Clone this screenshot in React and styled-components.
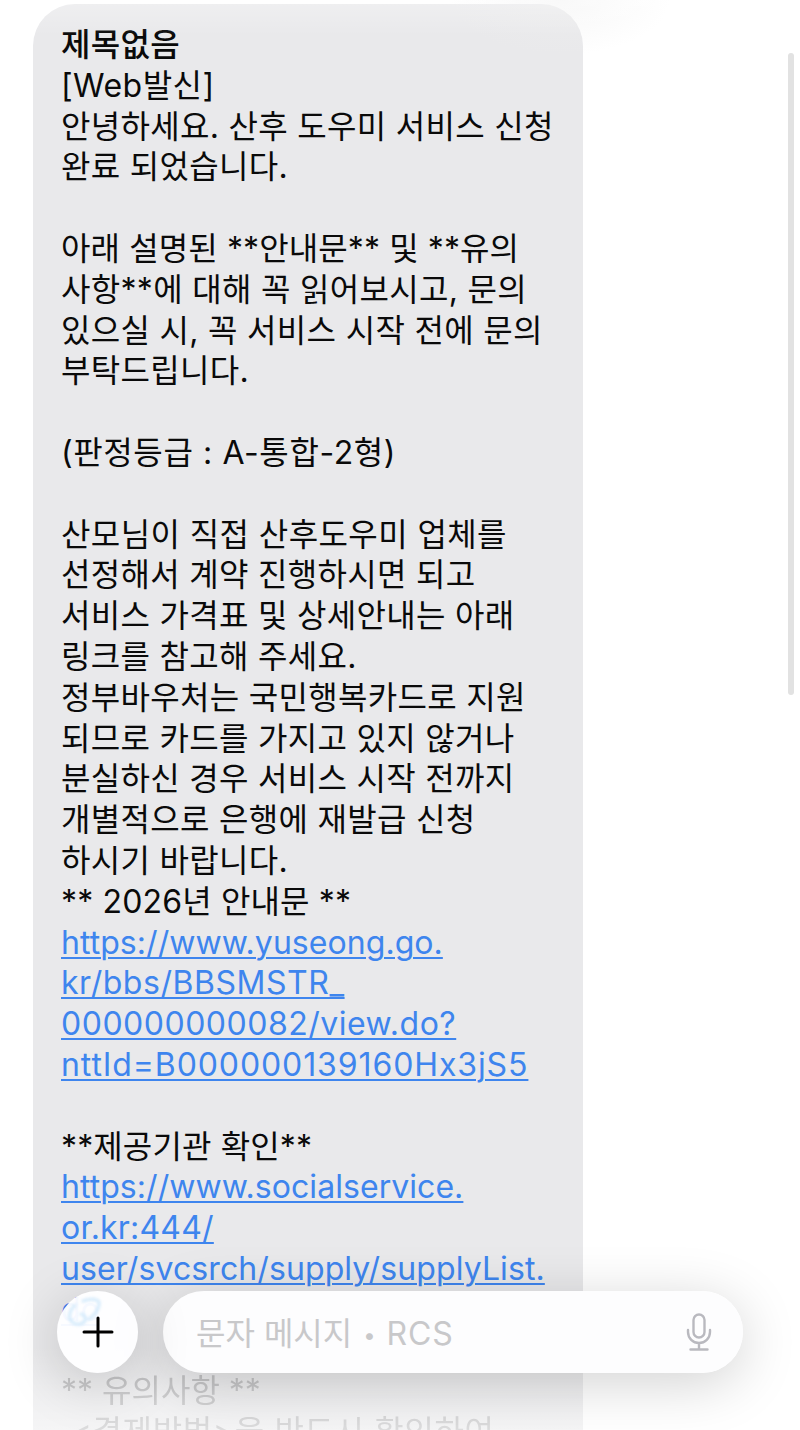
import React from "react";
import styled, { createGlobalStyle } from "styled-components";

const Global = createGlobalStyle`
  html, body { margin: 0; padding: 0; background: #fff; }
  #root { width: 800px; height: 1430px; overflow: hidden; }
`;

const Screen = styled.div`
  position: relative;
  width: 800px;
  height: 1430px;
  overflow: hidden;
  background: #fff;
`;

const Thread = styled.div`
  padding: 4px 0 0 33px;
`;

const Bubble = styled.div`
  width: 550px;
  height: 1500px;
  box-sizing: border-box;
  padding: 21px 0 0 28px;
  background: #e9e9eb;
  border-radius: 42px 42px 0 0;
  font-family: "Inter", "Noto Sans CJK KR", sans-serif;
  font-size: 32px;
  line-height: 40.8px;
  color: #0a0a0a;
  letter-spacing: 0.3px;
`;

const Line = styled.div`
  white-space: pre;
  height: 40.8px;
  font-weight: ${(p) => (p.$bold ? 500 : 400)};
  letter-spacing: ${(p) => (p.$track === undefined ? "inherit" : `${p.$track}px`)};
`;

const FadedLine = styled(Line)`
  color: #b4b4b6;
  filter: blur(0.5px);
`;

const LinkLine = styled(Line)`
  color: #3e85ee;
  text-decoration: underline;
  text-decoration-thickness: 2px;
  text-underline-offset: 3px;
`;

const TopFade = styled.div`
  position: absolute;
  left: 0;
  right: 0;
  top: 0;
  height: 60px;
  background:
    linear-gradient(to bottom, rgba(255, 255, 255, 0.3), rgba(255, 255, 255, 0) 36px),
    radial-gradient(ellipse 110px 55px at 560px 0, rgba(238, 238, 238, 0.5), rgba(255, 255, 255, 0));
`;

const Scrollbar = styled.div`
  position: absolute;
  right: 6px;
  top: 53px;
  width: 6px;
  height: 642px;
  border-radius: 3px;
  background: #e2e2e2;
`;

const Dock = styled.div`
  position: absolute;
  left: 0;
  right: 0;
  bottom: 0;
  height: 210px;
  padding: 71px 57px 0;
  box-sizing: border-box;
  display: flex;
  align-items: flex-start;
  gap: 25px;
  background: linear-gradient(to bottom, rgba(255, 255, 255, 0) 0%, rgba(255, 255, 255, 0) 60%, rgba(255, 255, 255, 0.55) 100%);
`;

const PlusButton = styled.div`
  position: relative;
  width: 81px;
  height: 82px;
  flex: none;
  border-radius: 50%;
  background: rgba(254, 254, 255, 0.96);
  box-shadow: 0 10px 56px rgba(0, 0, 0, 0.18);
  display: flex;
  align-items: center;
  justify-content: center;
  overflow: hidden;
`;

const Refraction = styled.svg`
  position: absolute;
  left: 8px;
  top: 5px;
  filter: blur(1.4px);
`;

const PlusIcon = styled.svg`
  position: relative;
`;

const Composer = styled.div`
  flex: none;
  width: 580px;
  height: 82px;
  border-radius: 41px;
  background: rgba(253, 253, 254, 0.96);
  box-shadow: 0 10px 56px rgba(0, 0, 0, 0.18);
  display: flex;
  align-items: center;
  justify-content: space-between;
  padding: 0 31px 0 33px;
  box-sizing: border-box;
`;

const Placeholder = styled.span`
  font-family: "Inter", "Noto Sans CJK KR", sans-serif;
  font-size: 32px;
  color: #c8c8ca;
  transform: translateY(-1px);
`;

const Dot = styled.span`
  font-size: 22px;
  margin: 0 11px;
  vertical-align: 2px;
`;

const Rcs = styled.span`
  letter-spacing: 0.8px;
`;

const lines = [
  { text: "[Web발신]", track: 0.45 },
  { text: "안녕하세요. 산후 도우미 서비스 신청" },
  { text: "완료 되었습니다." },
  { text: "" },
  { text: "아래 설명된 **안내문** 및 **유의", track: 0.1 },
  { text: "사항**에 대해 꼭 읽어보시고, 문의" },
  { text: "있으실 시, 꼭 서비스 시작 전에 문의" },
  { text: "부탁드립니다." },
  { text: "" },
  { text: "(판정등급 : A-통합-2형)", track: 0.6 },
  { text: "" },
  { text: "산모님이 직접 산후도우미 업체를", track: 0.4 },
  { text: "선정해서 계약 진행하시면 되고" },
  { text: "서비스 가격표 및 상세안내는 아래" },
  { text: "링크를 참고해 주세요." },
  { text: "정부바우처는 국민행복카드로 지원" },
  { text: "되므로 카드를 가지고 있지 않거나" },
  { text: "분실하신 경우 서비스 시작 전까지" },
  { text: "개별적으로 은행에 재발급 신청" },
  { text: "하시기 바랍니다." },
  { text: "** 2026년 안내문 **", track: 0.15 },
  { link: "https://www.yuseong.go.", track: 0.05 },
  { link: "kr/bbs/BBSMSTR_", track: 0.55 },
  { link: "000000000082/view.do?", track: 0.5 },
  { link: "nttId=B000000139160Hx3jS5", track: 0.9 },
  { text: "" },
  { text: "**제공기관 확인**", track: 0.12 },
  { link: "https://www.socialservice.", track: 0.05 },
  { link: "or.kr:444/", track: 0.2 },
  { link: "user/svcsrch/supply/supplyList.", track: 0.1 },
  { link: "do", track: 0 },
  { text: "" },
  { faded: "** 유의사항 **", track: 0 },
  { faded: " <결제방법>을 반드시 확인하여", track: 0.65 },
];

function MessageLine({ line }) {
  if (line.link) return <LinkLine $track={line.track}>{line.link}</LinkLine>;
  if (line.faded) return <FadedLine $track={line.track}>{line.faded}</FadedLine>;
  return <Line $track={line.track}>{line.text || "\u00a0"}</Line>;
}

export default function App() {
  return (
    <Screen>
      <Global />
      <Thread>
        <Bubble>
          <Line $bold>제목없음</Line>
          {lines.map((l, i) => (
            <MessageLine key={i} line={l} />
          ))}
        </Bubble>
      </Thread>
      <TopFade />
      <Scrollbar />
      <Dock>
        <PlusButton>
          <Refraction width="44" height="40" viewBox="0 0 44 40" fill="none" stroke="#d3eafb" strokeWidth="3" strokeLinecap="round">
            <path d="M10 9c-5 5-8 12-3 17 4 3 10 3 13-1 1-3-1-7-4-7M18 5c5-2 14-3 16 1 1 6-5 14-10 17" />
          </Refraction>
          <PlusIcon width="34" height="34" viewBox="0 0 34 34" fill="none" stroke="#000" strokeWidth="3" strokeLinecap="round">
            <path d="M17 3v28M3 17h28" />
          </PlusIcon>
        </PlusButton>
        <Composer>
          <Placeholder>
            문자 메시지<Dot>•</Dot><Rcs>RCS</Rcs>
          </Placeholder>
          <svg width="26" height="38" viewBox="0 0 26 38" fill="none" stroke="#b9b9bf" strokeWidth="2.4" strokeLinecap="round">
            <rect x="7.5" y="1.5" width="11" height="23" rx="5.5" />
            <path d="M2 17v2a11 11 0 0 0 22 0v-2M13 30v6M4.5 36.5h17" />
          </svg>
        </Composer>
      </Dock>
    </Screen>
  );
}
